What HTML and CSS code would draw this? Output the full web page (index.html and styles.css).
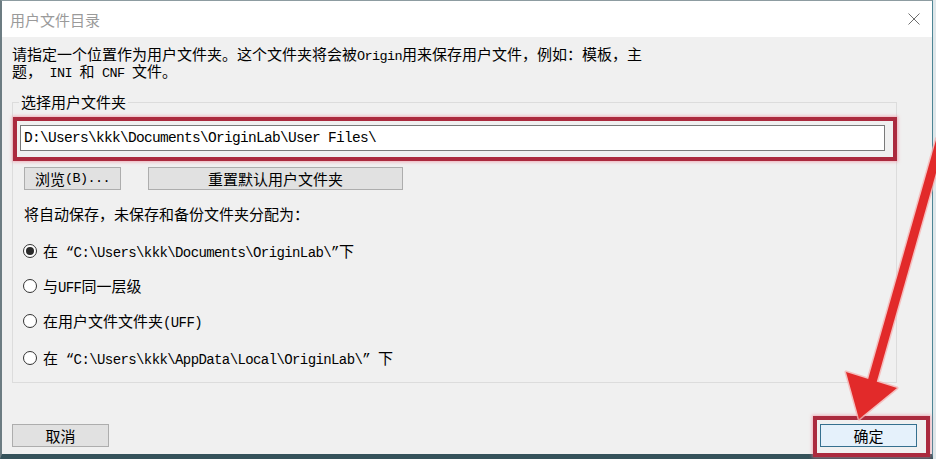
FILE: index.html
```html
<!DOCTYPE html>
<html lang="zh-CN">
<head>
<meta charset="utf-8">
<title>用户文件目录</title>
<link rel="stylesheet" href="styles.css">
</head>
<body>
<div class="frame">
  <div class="titlebar">
    <span class="title">用户文件目录</span>
    <svg class="close" width="12" height="12" viewBox="0 0 12 12"><path d="M0.5 0.5 L11.5 11.5 M11.5 0.5 L0.5 11.5" stroke="#6e6e6e" stroke-width="1" fill="none"/></svg>
  </div>
  <div class="desc">
    <div class="dline">请指定一个位置作为用户文件夹。这个文件夹将会被<span class="m1">Origin</span>用来保存用户文件，例如：模板，主</div>
    <div class="dline">题，<span class="m1"> INI </span>和<span class="m1"> CNF </span>文件。</div>
  </div>
  <fieldset class="group">
    <legend class="legend">选择用户文件夹</legend>
    <div class="hl">
      <div class="path">D:\Users\kkk\Documents\OriginLab\User Files\</div>
    </div>
    <div class="btnrow">
      <div class="btn b1">浏览<span class="m1">(B)...</span></div>
      <div class="btn b2">重置默认用户文件夹</div>
    </div>
    <div class="assign">将自动保存，未保存和备份文件夹分配为：</div>
    <div class="radios">
      <div class="radio"><span class="rc on"></span><span class="rt">在<span class="m2"> “C:\Users\kkk\Documents\OriginLab\”</span>下</span></div>
      <div class="radio"><span class="rc"></span><span class="rt">与<span class="m2">UFF</span>同一层级</span></div>
      <div class="radio"><span class="rc"></span><span class="rt">在用户文件文件夹<span class="m2">(UFF)</span></span></div>
      <div class="radio last"><span class="rc"></span><span class="rt">在<span class="m2"> “C:\Users\kkk\AppData\Local\OriginLab\” </span>下</span></div>
    </div>
  </fieldset>
  <div class="footer">
    <div class="btn cancel">取消</div>
    <div class="hl2"><div class="btn ok">确定</div></div>
  </div>
</div>
<svg class="arrow" width="936" height="459" viewBox="0 0 936 459">
  <g stroke="#f6b3b3" stroke-linejoin="round" fill="none" opacity="0.8">
    <line x1="941" y1="139" x2="872" y2="382" stroke-width="12"/>
    <polygon points="846,372 897,388 859,419" stroke-width="3"/>
  </g>
  <line x1="941" y1="139" x2="872" y2="382" stroke="#e22a2a" stroke-width="9"/>
  <polygon points="846,372 897,388 859,419" fill="#e22a2a"/>
</svg>
</body>
</html>
```
FILE: styles.css
```css
html, body {
  margin: 0;
  padding: 0;
}
body {
  width: 936px;
  height: 459px;
  overflow: hidden;
  position: relative;
  background: #dfe7ea;
  font-family: "Noto Sans CJK SC", sans-serif;
  font-size: 15px;
  color: #000;
}
.frame {
  width: 930px;
  height: 453px;
  border-left: 2px solid #6c7c82;
  border-right: 1px solid #4d8595;
  border-top: 1px solid #8d9ca1;
  border-bottom: 5px solid #35525a;
  background: #f0f0f0;
}
.titlebar {
  height: 36px;
  background: #fff;
  display: flex;
  align-items: center;
  justify-content: space-between;
  padding: 0 12px 0 8px;
}
.title {
  color: #9a9a9a;
  font-size: 15px;
  line-height: 1;
}
.close {
  display: block;
}
.desc {
  padding: 8px 0 0 10px;
}
.dline {
  height: 17px;
  line-height: 17px;
  white-space: nowrap;
}
.m1 {
  font-family: "Liberation Mono", monospace;
  font-size: 13.5px;
  letter-spacing: -0.6px;
  line-height: 1;
}
.m2 {
  font-family: "Liberation Mono", monospace;
  font-size: 14px;
  letter-spacing: -0.6px;
  line-height: 1;
}
.group {
  box-sizing: border-box;
  width: 885px;
  margin: 14px 0 0 10px;
  padding: 0 0 15px 0;
  border: 1px solid #dcdcdc;
  min-width: 0;
}
.legend {
  margin-left: 6px;
  padding: 0 2px;
  height: 18px;
  line-height: 18px;
  font-size: 15px;
}
.hl {
  margin: 6px -1px 0 0;
  border: 4px solid #ab2a3e;
  padding: 4px 8px 6px 3px;
  box-shadow: 0 0 3px 1px rgba(240, 120, 140, 0.55);
}
.path {
  box-sizing: border-box;
  height: 26px;
  border: 1px solid #7a7a7a;
  background: #fff;
  padding-left: 3px;
  display: flex;
  align-items: center;
  font-family: "Liberation Mono", monospace;
  font-size: 14.5px;
  letter-spacing: -0.7px;
  white-space: nowrap;
}
.btnrow {
  display: flex;
  gap: 27px;
  margin: 6px 0 0 11px;
}
.btn {
  box-sizing: border-box;
  height: 23px;
  border: 1px solid #adadad;
  background: #e1e1e1;
  display: flex;
  align-items: center;
  justify-content: center;
  font-size: 15px;
  line-height: 1;
  white-space: nowrap;
}
.b1 {
  width: 97px;
}
.b2 {
  width: 255px;
}
.assign {
  margin: 15px 0 0 11px;
  height: 18px;
  line-height: 18px;
}
.radios {
  display: flex;
  flex-direction: column;
  gap: 17px;
  margin: 19px 0 0 10px;
}
.radio {
  display: flex;
  align-items: center;
  gap: 6px;
  height: 18px;
  white-space: nowrap;
}
.rt {
  line-height: 18px;
}
.radio.last {
  margin-top: 2px;
}
.rc {
  box-sizing: border-box;
  width: 14px;
  height: 14px;
  border-radius: 50%;
  border: 1px solid #333;
  background: #fff;
  display: flex;
  align-items: center;
  justify-content: center;
  flex: none;
}
.rc.on::after {
  content: "";
  width: 8px;
  height: 8px;
  border-radius: 50%;
  background: #2a2a2a;
}
.footer {
  display: flex;
  justify-content: space-between;
  align-items: flex-start;
  margin: 33px 0 0 10px;
  padding-right: 2px;
}
.cancel {
  width: 97px;
  margin-top: 8px;
}
.hl2 {
  border: 4px solid #ab2a3e;
  padding: 4px 9px 6px 3px;
  box-shadow: 0 0 3px 1px rgba(240, 120, 140, 0.55);
}
.ok {
  width: 97px;
  background: #e5f1fb;
  border-color: #35708f;
}
.arrow {
  position: absolute;
  left: 0;
  top: 0;
  pointer-events: none;
}
```
